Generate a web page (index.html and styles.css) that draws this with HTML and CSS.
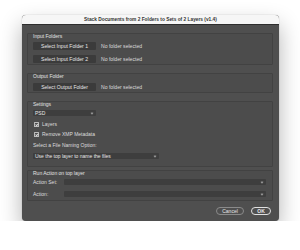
FILE: index.html
```html
<!DOCTYPE html>
<html lang="en">
<head>
    <meta charset="UTF-8">
    <meta name="viewport" content="width=device-width, initial-scale=1.0">
    <title>Stack Documents</title>
    <link rel="stylesheet" href="styles.css">
</head>
<body>

<div class="dialog">
    <div class="titlebar">Stack Documents from 2 Folders to Sets of 2 Layers (v1.4)</div>

    <div class="content">
        <div class="group group-input">
            <div class="group-label">Input Folders</div>
            <div class="row">
                <button class="btn">Select Input Folder 1</button>
                <span class="status">No folder selected</span>
            </div>
            <div class="row">
                <button class="btn">Select Input Folder 2</button>
                <span class="status">No folder selected</span>
            </div>
        </div>

        <div class="group group-output">
            <div class="group-label">Output Folder</div>
            <div class="row">
                <button class="btn">Select Output Folder</button>
                <span class="status">No folder selected</span>
            </div>
        </div>

        <div class="group group-settings">
            <div class="group-label">Settings</div>
            <div class="select select-format">PSD<span class="chev"></span></div>
            <label class="check"><span class="box"></span>Layers</label>
            <label class="check"><span class="box"></span>Remove XMP Metadata</label>
            <div class="naming-label">Select a File Naming Option:</div>
            <div class="select select-naming">Use the top layer to name the files<span class="chev"></span></div>
        </div>

        <div class="group group-action">
            <div class="group-label">Run Action on top layer</div>
            <div class="field">
                <span class="field-label">Action Set:</span>
                <div class="select select-wide"><span class="chev"></span></div>
            </div>
            <div class="field">
                <span class="field-label">Action:</span>
                <div class="select select-wide"><span class="chev"></span></div>
            </div>
        </div>

        <div class="footer">
            <button class="pill">Cancel</button>
            <button class="pill pill-default">OK</button>
        </div>
    </div>
</div>

</body>
</html>
```

FILE: styles.css
```css
body {
    margin: 0;
    background: #ffffff;
    font-family: 'Liberation Sans', Arial, sans-serif;
    font-size: 5px;
    color: #dcdcdc;
}
.dialog {
    width: 257px;
    height: 206px;
    margin: 15px 0 0 22px;
    border-radius: 4px;
    overflow: hidden;
    background: #4f4f4f;
    box-shadow: 0 10px 22px rgba(0, 0, 0, 0.3), 0 0 1px rgba(0, 0, 0, 0.4);
    display: flex;
    flex-direction: column;
}
.titlebar {
    height: 10px;
    line-height: 10px;
    background: #f6f6f6;
    color: #333;
    font-weight: bold;
    font-size: 4.8px;
    text-align: center;
    border-bottom: 1px solid #2e2e2e;
    box-sizing: border-box;
}
.content {
    padding: 8px 6px 0 5px;
    display: flex;
    flex-direction: column;
}
.group {
    border: 1px solid #424242;
    border-radius: 1px;
    background: #4c4c4c;
    padding: 0 6px 3px 5px;
    display: flex;
    flex-direction: column;
    box-sizing: border-box;
}
.group-label {
    height: 4px;
    line-height: 4px;
    margin-bottom: 4px;
    color: #e2e2e2;
}
.row {
    display: flex;
    align-items: center;
    height: 8px;
    margin-bottom: 5px;
}
.row:last-child {
    margin-bottom: 0;
}
.btn {
    width: 63px;
    height: 8px;
    padding: 0;
    border: none;
    border-radius: 1px;
    background: #3b3b3b;
    color: #e8e8e8;
    font-family: inherit;
    font-size: 5.1px;
    line-height: 8px;
}
.status {
    margin-left: 5px;
    font-size: 5.1px;
}
.group-input {
    height: 32px;
}
.group-output {
    height: 20px;
    margin-top: 8px;
}
.group-output .group-label {
    margin-bottom: 5px;
}
.group-settings {
    height: 66px;
    margin-top: 8px;
}
.select {
    position: relative;
    height: 6px;
    line-height: 6px;
    background: #3e3e3e;
    border-radius: 1px;
    padding-left: 2px;
    box-sizing: border-box;
    color: #e8e8e8;
}
.chev {
    position: absolute;
    right: 3px;
    top: 2px;
    width: 1px;
    height: 1px;
    border-right: 0.5px solid #999;
    border-bottom: 0.5px solid #999;
    transform: rotate(45deg);
}
.select-format {
    width: 63px;
}
.check {
    display: flex;
    align-items: center;
    height: 6px;
    margin-top: 4px;
}
.select-format + .check {
    margin-top: 5px;
}
.box {
    width: 3px;
    height: 3px;
    border: 0.6px solid #bbb;
    border-radius: 0.5px;
    margin: 0 3px 0 1px;
    position: relative;
}
.box::after {
    content: "";
    position: absolute;
    left: 0.9px;
    top: 0;
    width: 0.9px;
    height: 1.8px;
    border-right: 0.6px solid #ddd;
    border-bottom: 0.6px solid #ddd;
    transform: rotate(45deg);
}
.naming-label {
    height: 6px;
    line-height: 6px;
    margin-top: 5px;
}
.select-naming {
    width: 126px;
    margin-top: 5px;
}
.group-action {
    height: 31px;
    margin-top: 3px;
}
.field {
    display: flex;
    align-items: center;
    height: 6px;
    margin-bottom: 6px;
}
.field:last-child {
    margin-bottom: 0;
}
.field-label {
    width: 31px;
}
.select-wide {
    flex: 1;
}
.footer {
    display: flex;
    justify-content: flex-end;
    gap: 7px;
    margin-top: 6px;
    padding-right: 2px;
}
.pill {
    height: 8px;
    padding: 0;
    border: 0.7px solid #8a8a8a;
    border-radius: 4px;
    background: transparent;
    color: #e8e8e8;
    font-family: inherit;
    font-size: 5px;
    line-height: 6px;
    width: 28px;
}
.pill-default {
    width: 20px;
    border-color: #e0e0e0;
    font-weight: bold;
}
```
